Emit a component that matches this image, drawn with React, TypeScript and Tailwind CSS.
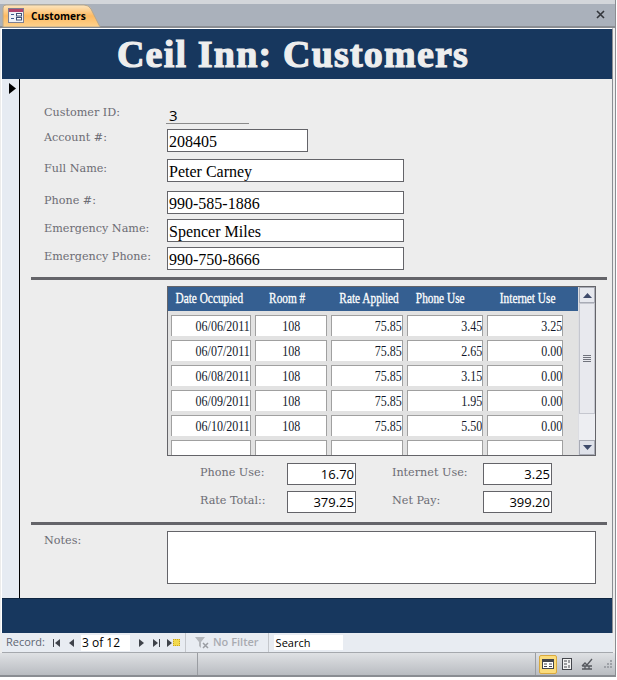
import React from 'react'

const serif = "font-['DejaVu_Serif','Liberation_Serif',serif]"
const rows = [
  ['06/06/2011', '108', '75.85', '3.45', '3.25'],
  ['06/07/2011', '108', '75.85', '2.65', '0.00'],
  ['06/08/2011', '108', '75.85', '3.15', '0.00'],
  ['06/09/2011', '108', '75.85', '1.95', '0.00'],
  ['06/10/2011', '108', '75.85', '5.50', '0.00'],
]
const colWidths = ['w-[80px]', 'w-[72px]', 'w-[72px]', 'w-[76px]', 'w-[76px]']
const headers = [
  { label: 'Date Occupied', width: 'w-[82px]' },
  { label: 'Room #', width: 'w-[74px]' },
  { label: 'Rate Applied', width: 'w-[90px]' },
  { label: 'Phone Use', width: 'w-[52px]' },
  { label: 'Internet Use', width: 'w-[111px] pl-[13px]' },
]

function Label({ children, className = '' }: { children: React.ReactNode; className?: string }) {
  return <div className={`${serif} text-[11.2px] leading-[14px] text-[#6c6c74] whitespace-nowrap ${className}`}>{children}</div>
}

function Field({ label, value, width, mt, labelOffset }: { label: string; value: string; width: string; mt: string; labelOffset: string }) {
  return (
    <div className={`flex ${mt}`}>
      <Label className={`w-[123px] ${labelOffset}`}>{label}</Label>
      <div className={`${width} h-[23px] border border-[#646469] bg-white pl-[1px] font-['Liberation_Serif',serif] text-[16px] leading-[23px] text-black`}>
        {value}
      </div>
    </div>
  )
}

function Total({ label, value, labelWidth }: { label: string; value: string; labelWidth: string }) {
  return (
    <div className="flex items-start">
      <Label className={`${labelWidth} pt-[3px]`}>{label}</Label>
      <div className="w-[69px] h-[22px] border border-[#646469] bg-white pr-[1px] text-right font-['Open_Sans',sans-serif] text-[13px] leading-[21px] text-black">
        {value}
      </div>
    </div>
  )
}

function Cell({ value, width, center }: { value: string; width: string; center?: boolean }) {
  return (
    <div className={`${width} h-[21px] shrink-0 border border-b-0 border-[#a0a0a0] bg-white flex items-center overflow-hidden ${center ? 'justify-center' : 'justify-end'}`}>
      <span className={`inline-block scale-x-[.8] font-['Liberation_Serif',serif] text-[15px] text-[#11182a] ${center ? 'origin-center' : 'origin-right'}`}>
        {value}
      </span>
    </div>
  )
}

function Nav({ d }: { d: string }) {
  return (
    <svg width="10" height="10" viewBox="0 0 10 10" className="shrink-0">
      <path d={d} fill="#3f434a" />
    </svg>
  )
}

export default function App() {
  return (
    <div className="w-[617px] h-[680px] bg-white overflow-hidden font-['Liberation_Sans',sans-serif]">
      <div className="w-[616px] h-[677px] bg-[#ececec] border-r border-[#8a8d92] flex flex-col">
        <div className="h-[4px] shrink-0 bg-[#d3d6da]" />

        {/* tab strip */}
        <div className="h-[24px] shrink-0 bg-[#aab1bb] border-b-2 border-[#8a8d92] flex justify-between">
          <div className="relative w-[100px] h-[23px] ml-[2px]">
            <svg width="100" height="23" viewBox="0 0 100 23" className="absolute left-0 top-0">
              <defs>
                <linearGradient id="tab" x1="0" y1="0" x2="0" y2="1">
                  <stop offset="0" stopColor="#fde6c0" />
                  <stop offset="0.5" stopColor="#fdba62" />
                  <stop offset="1" stopColor="#fdd28e" />
                </linearGradient>
              </defs>
              <path d="M1 23V4Q1 1 4 1H82Q87 1 89 5L98 23Z" fill="url(#tab)" stroke="#b7a78c" />
            </svg>
            <div className="absolute left-[6px] top-[4px]">
              <svg width="16" height="15" viewBox="0 0 16 15">
                <rect x="0.5" y="0.5" width="15" height="14" fill="#eef1f7" stroke="#7d7f92" />
                <rect x="1" y="1" width="14" height="3" fill="#b0436c" />
                <path d="M3 6.5H6M3 10.5H6" stroke="#3d5a8c" />
                <rect x="8.5" y="5.5" width="5" height="2.5" fill="#fff" stroke="#3d4f75" />
                <rect x="8.5" y="9.5" width="5" height="2.5" fill="#fff" stroke="#3d4f75" />
              </svg>
            </div>
            <div className="absolute left-[29px] top-[5px] text-[10.2px] leading-[14px] font-bold font-['Open_Sans',sans-serif] text-black">Customers</div>
          </div>
          <div className="pr-[10px] pt-[6px]">
            <svg width="9" height="9" viewBox="0 0 9 9">
              <path d="M1 1L8 8M8 1L1 8" stroke="#33363b" strokeWidth="1.6" />
            </svg>
          </div>
        </div>

        {/* form */}
        <div className="w-[612px] ml-[1px] h-[605px] shrink-0 flex flex-col border-t border-l border-r border-white border-r-[#8a8d92]">
          <div className="h-[50px] shrink-0 bg-[#17375e] text-center font-['Liberation_Serif',serif] font-bold text-[38px] leading-[50px] text-[#eeeeee] [-webkit-text-stroke:1.2px_#eeeeee] tracking-[1.2px] pr-[28px]">
            Ceil Inn: Customers
          </div>

          <div className="h-[519px] shrink-0 flex bg-[#ededed]">
            <div className="w-[18px] shrink-0 bg-[#e6ebf2] border-r border-black pl-[6px] pt-[3px]">
              <svg width="9" height="13" viewBox="0 0 9 13"><path d="M1 1L8 6.5L1 12Z" fill="#000" /></svg>
            </div>

            <div className="flex-1 pl-[11px] pr-[5px]">
              <div className="pl-[13px]">
                <div className="flex pt-[26px] h-[50px]">
                  <Label className="w-[122px] pt-[1px]">Customer ID:</Label>
                  <div className="w-[83px] h-[19px] border-b border-[#8a8a8a] pl-[3px] font-['Open_Sans',sans-serif] text-[15px] leading-[20px] text-black">3</div>
                </div>
                <Field label="Account #:" value="208405" width="w-[141px]" mt="mt-[0px]" labelOffset="pt-[2px]" />
                <Field label="Full Name:" value="Peter Carney" width="w-[237px]" mt="mt-[7px]" labelOffset="pt-[3px]" />
                <Field label="Phone #:" value="990-585-1886" width="w-[237px]" mt="mt-[9px]" labelOffset="pt-[3px]" />
                <Field label="Emergency Name:" value="Spencer Miles" width="w-[237px]" mt="mt-[5px]" labelOffset="pt-[3px]" />
                <Field label="Emergency Phone:" value="990-750-8666" width="w-[237px]" mt="mt-[5px]" labelOffset="pt-[3px]" />
              </div>

              <div className="h-[3px] bg-[#646469] mt-[7px]" />

              {/* subform */}
              <div className="ml-[136px] mt-[6px] w-[429px] h-[170px] border border-[#646469] bg-[#e2e2e2] flex overflow-hidden">
                <div className="flex-1">
                  <div className="h-[24px] bg-[#355f91] flex items-center">
                    {headers.map((h) => (
                      <div key={h.label} className={`${h.width} shrink-0 flex justify-center whitespace-nowrap`}>
                        <span className="inline-block shrink-0 scale-x-[.78] font-['Liberation_Serif',serif] text-[14.5px] text-white [-webkit-text-stroke:.3px_#ffffff]">{h.label}</span>
                      </div>
                    ))}
                  </div>
                  <div className="pl-[3px] pt-[4px] flex flex-col gap-[4px]">
                    {rows.map((row) => (
                      <div key={row[0]} className="flex gap-[4px]">
                        {row.map((v, i) => (
                          <Cell key={i} value={v} width={colWidths[i]} center={i === 1} />
                        ))}
                      </div>
                    ))}
                    <div className="flex gap-[4px]">
                      {colWidths.map((w, i) => (
                        <Cell key={i} value="" width={w} />
                      ))}
                    </div>
                  </div>
                </div>
                <div className="w-[17px] shrink-0 bg-[#edeef2] flex flex-col border-l border-[#dcdde2]">
                  <div className="h-[16px] bg-[#e6e8ee] border border-[#a8abb5] flex items-center justify-center">
                    <svg width="9" height="5" viewBox="0 0 9 5"><path d="M0 5L4.5 0L9 5Z" fill="#3d4a6b" /></svg>
                  </div>
                  <div className="h-[111px] bg-[#e8e9ee] border border-[#c5c7cf] flex items-center justify-center">
                    <svg width="8" height="7" viewBox="0 0 8 7"><path d="M0 .5H8M0 2.5H8M0 4.5H8M0 6.5H8" stroke="#70737c" /></svg>
                  </div>
                  <div className="flex-1" />
                  <div className="h-[15px] bg-[#dfe2ea] border border-[#a8abb5] flex items-center justify-center">
                    <svg width="9" height="5" viewBox="0 0 9 5"><path d="M0 0L4.5 5L9 0Z" fill="#3d4a6b" /></svg>
                  </div>
                </div>
              </div>

              {/* totals */}
              <div className="ml-[169px] mt-[7px] flex flex-col gap-[6px]">
                <div className="flex gap-[36px]">
                  <Total label="Phone Use:" value="16.70" labelWidth="w-[87px]" />
                  <Total label="Internet Use:" value="3.25" labelWidth="w-[91px]" />
                </div>
                <div className="flex gap-[36px]">
                  <Total label="Rate Total::" value="379.25" labelWidth="w-[87px]" />
                  <Total label="Net Pay:" value="399.20" labelWidth="w-[91px]" />
                </div>
              </div>

              <div className="h-[3px] bg-[#646469] mt-[9px]" />

              <div className="flex pl-[13px] mt-[6px]">
                <Label className="w-[123px] pt-[3px]">Notes:</Label>
                <div className="w-[429px] h-[53px] border border-[#646469] bg-white" />
              </div>
            </div>
          </div>

          <div className="h-[35px] shrink-0 bg-[#17375e] border-t border-[#0e2540]" />
        </div>

        {/* record navigation */}
        <div className="w-[611px] ml-[2px] h-[20px] shrink-0 bg-[#e8ecf2] flex items-center border-b border-[#a5a8ad] text-[11px] font-['Open_Sans',sans-serif]">
          <span className="ml-[4px] text-[#5f6672]">Record:</span>
          <div className="ml-[6px] flex items-center gap-[6px]">
            <Nav d="M2 1H3V9H2ZM9 1V9L4 5Z" />
            <Nav d="M7 1V9L2 5Z" />
          </div>
          <div className="ml-[4px] w-[49px] h-[16px] bg-white pl-[1px] text-[12px] leading-[16px] text-black">3 of 12</div>
          <div className="ml-[6px] flex items-center gap-[6px]">
            <Nav d="M3 1L8 5L3 9Z" />
            <Nav d="M1 1L6 5L1 9ZM7 1H8V9H7Z" />
            <div className="flex items-center -ml-[3px]">
              <Nav d="M2 1L7 5L2 9Z" />
              <div className="w-[7px] h-[7px] -ml-[2px] bg-[#f2d94e] border border-dotted border-[#c9a51e]" />
            </div>
          </div>
          <div className="ml-[5px] h-full w-[1px] bg-[#c4c7cc]" />
          <svg width="16" height="14" viewBox="0 0 16 14" className="ml-[8px]">
            <path d="M1 1H11L7 6V12L5 10V6Z" fill="#b4b7bc" />
            <path d="M9 7L14 12M14 7L9 12" stroke="#9a9da3" strokeWidth="1.5" />
          </svg>
          <span className="ml-[3px] font-semibold text-[#a8abb1]">No Filter</span>
          <div className="ml-[9px] h-full w-[1px] bg-[#c4c7cc]" />
          <div className="ml-[5px] w-[69px] h-[15px] bg-white pl-[2px] text-[11px] leading-[15px] text-black">Search</div>
        </div>

        {/* status bar */}
        <div className="h-[24px] shrink-0 bg-gradient-to-b from-[#dfe1e4] to-[#b9bcc1] border-b-2 border-[#8a8d92] flex items-center">
          <div className="ml-[197px] h-full w-[1px] bg-[#9a9da2]" />
          <div className="ml-auto h-full w-[1px] bg-[#9a9da2]" />
          <div className="ml-[3px] w-[18px] h-[19px] rounded-[2px] bg-[#fbdc7c] border border-[#d9a93e] flex items-center justify-center">
            <svg width="12" height="10" viewBox="0 0 12 10">
              <rect x="0.5" y="0.5" width="11" height="9" fill="#fff" stroke="#44464c" />
              <rect x="1" y="1" width="10" height="2" fill="#44464c" />
              <path d="M2 5H5M7 5H10M2 7.5H5M7 7.5H10" stroke="#44464c" />
            </svg>
          </div>
          <svg width="12" height="12" viewBox="0 0 12 12" className="ml-[4px]">
            <rect x="1.5" y="0.5" width="9" height="11" fill="#f2f2f2" stroke="#44464c" />
            <path d="M3 3H6M3 6H6M3 9H6M8 2V5M8 7V10" stroke="#44464c" />
          </svg>
          <svg width="12" height="12" viewBox="0 0 12 12" className="ml-[8px]">
            <path d="M1 8L4 5L6 7L11 1M1 8H11M1 11H11M4 8V11M8 8V11" stroke="#55585e" fill="none" strokeWidth="1.3" />
          </svg>
          <svg width="11" height="11" viewBox="0 0 11 11" className="ml-[8px] mr-[3px]">
            <path d="M9 1h2v2H9zM6 4h2v2H6zM9 4h2v2H9zM3 7h2v2H3zM6 7h2v2H6zM9 7h2v2H9z" fill="#9ea1a7" />
          </svg>
        </div>
      </div>
    </div>
  )
}
